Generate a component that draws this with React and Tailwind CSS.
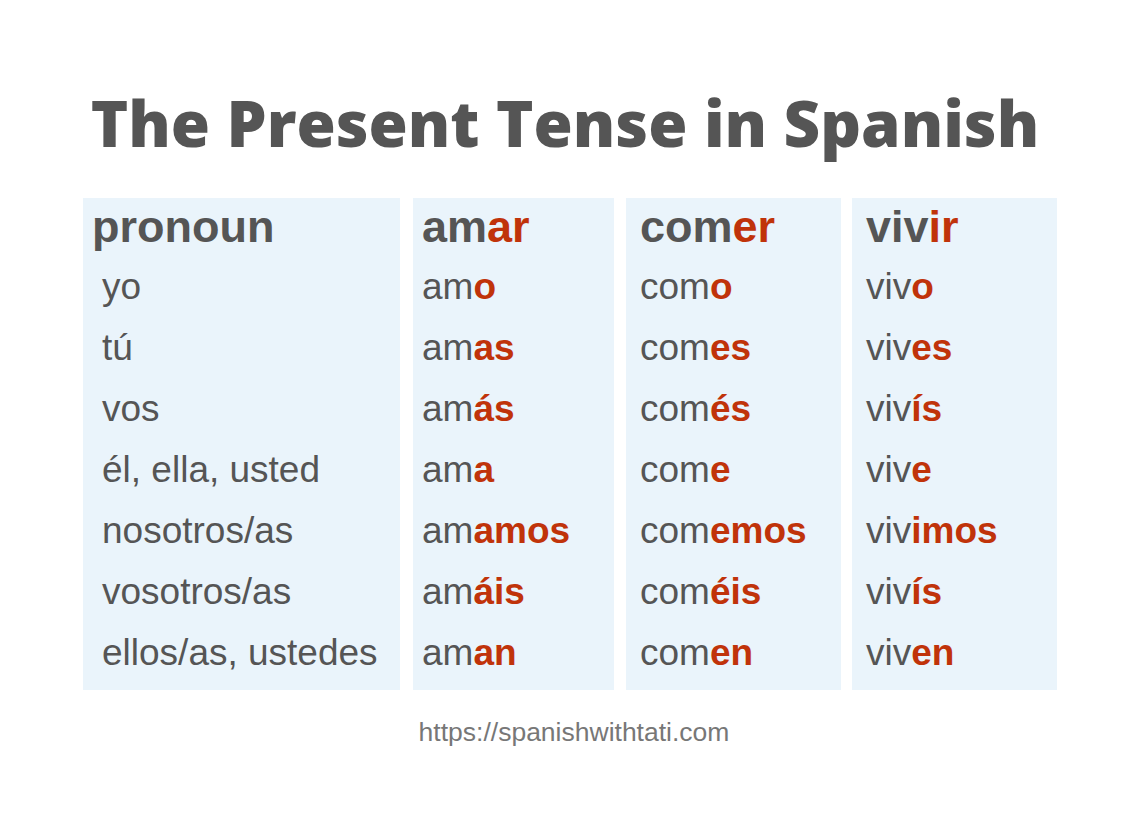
import React from "react";

const rows = [
  ["yo", ["am", "o"], ["com", "o"], ["viv", "o"]],
  ["tú", ["am", "as"], ["com", "es"], ["viv", "es"]],
  ["vos", ["am", "ás"], ["com", "és"], ["viv", "ís"]],
  ["él, ella, usted", ["am", "a"], ["com", "e"], ["viv", "e"]],
  ["nosotros/as", ["am", "amos"], ["com", "emos"], ["viv", "imos"]],
  ["vosotros/as", ["am", "áis"], ["com", "éis"], ["viv", "ís"]],
  ["ellos/as, ustedes", ["am", "an"], ["com", "en"], ["viv", "en"]],
];

function Col({ width, pad, header, items, ml }) {
  return (
    <div className={`bg-[#eaf4fb] pb-[7px] ${width} ${pad} ${ml}`}>
      <div className="h-[58px] leading-[58px] text-[45px] font-bold text-[#555555]">
        {header}
      </div>
      {items.map((it, i) => (
        <div key={i} className="h-[61px] leading-[61px] text-[37px] text-[#555555] whitespace-nowrap">
          {it}
        </div>
      ))}
    </div>
  );
}

export default function App() {
  const verbCol = (idx) =>
    rows.map((r) => (
      <>
        {r[idx][0]}
        <span className="font-bold text-[#c0330a]">{r[idx][1]}</span>
      </>
    ));
  return (
    <div
      className="w-[1148px] h-[832px] bg-white overflow-hidden"
      style={{ fontFamily: '"Liberation Sans", Arial, sans-serif' }}
    >
      <h1
        className="pt-[83px] h-[163px] leading-[80px] text-[63.5px] font-extrabold text-[#555555] text-center pr-[18px]"
        style={{ fontFamily: '"Open Sans", sans-serif' }}
      >
        The Present Tense in Spanish
      </h1>
      <div className="flex mt-[35px] ml-[83px]">
        <Col
          width="w-[317px]"
          pad="pl-[9px]"
          ml=""
          header="pronoun"
          items={rows.map((r) => <span className="pl-[10px]">{r[0]}</span>)}
        />
        <Col
          width="w-[201px]"
          pad="pl-[9px]"
          ml="ml-[13px]"
          header={<>am<span className="text-[#c0330a]">ar</span></>}
          items={verbCol(1)}
        />
        <Col
          width="w-[215px]"
          pad="pl-[14px]"
          ml="ml-[12px]"
          header={<>com<span className="text-[#c0330a]">er</span></>}
          items={verbCol(2)}
        />
        <Col
          width="w-[205px]"
          pad="pl-[14px]"
          ml="ml-[11px]"
          header={<>viv<span className="text-[#c0330a]">ir</span></>}
          items={verbCol(3)}
        />
      </div>
      <div className="mt-[27px] h-[30px] leading-[30px] text-[26.5px] text-[#777777] text-center">
        https://spanishwithtati.com
      </div>
    </div>
  );
}
